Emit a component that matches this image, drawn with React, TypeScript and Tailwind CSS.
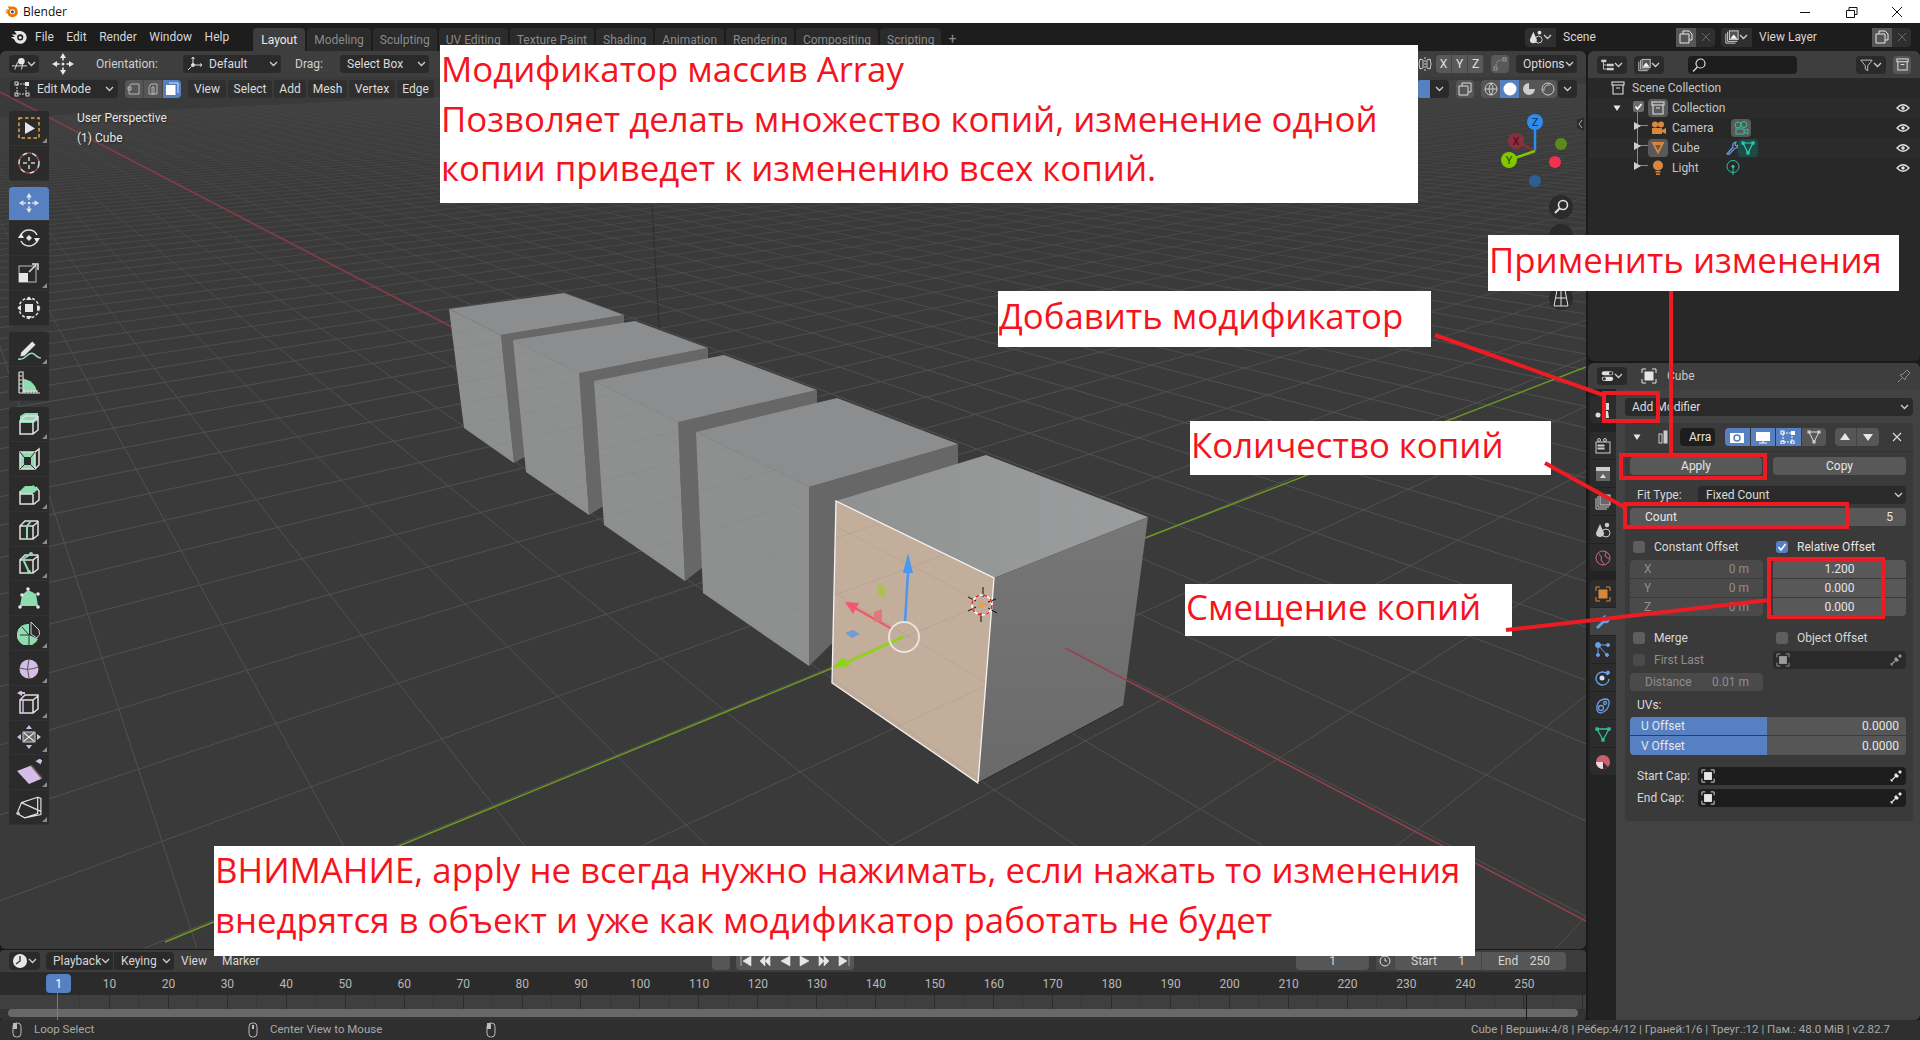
import type { ReactNode } from "react";

const UI = "font-['Roboto',sans-serif]";

const Ic = ({ s = 16, children, v = 24 }: { s?: number; v?: number; children: ReactNode }) => (
  <svg width={s} height={s} viewBox={`0 0 ${v} ${v}`} fill="none" stroke="#e0e0e0" strokeWidth="1.5" className="shrink-0">
    {children}
  </svg>
);

const G = "#8fdcb0";
const P = "#d6bde8";

const Box = () => (
  <path d="M3 9 L16 9 L21 5 L21 18 L16 22 L3 22 Z M16 9 L16 22 M3 9 L8 4 L21 4" />
);

const Chevron = ({ c = "#cfcfcf" }: { c?: string }) => (
  <svg width="9" height="6" viewBox="0 0 9 6" fill="none" stroke={c} strokeWidth="1.3" className="shrink-0">
    <path d="M1 1 L4.5 4.5 L8 1" />
  </svg>
);

const MoveIcon = ({ s = 22 }: { s?: number }) => (
  <Ic s={s}>
    <g fill="#e6e6e6" stroke="none">
      <path d="M12 1 L15 6 L9 6 Z M12 23 L15 18 L9 18 Z M1 12 L6 9 L6 15 Z M23 12 L18 9 L18 15 Z" />
      <circle cx="12" cy="12" r="1.5" />
      <rect x="11.2" y="6" width="1.6" height="2.5" />
      <rect x="11.2" y="15.5" width="1.6" height="2.5" />
      <rect x="6" y="11.2" width="2.5" height="1.6" />
      <rect x="15.5" y="11.2" width="2.5" height="1.6" />
    </g>
  </Ic>
);

const CubeSel = ({ c = "#e6e6e6", s = 16 }: { c?: string; s?: number }) => (
  <svg width={s} height={s} viewBox="0 0 16 16" className="shrink-0" fill="none" stroke={c} strokeWidth="1">
    <path d="M1 5 V1 H5 M11 1 H15 V5 M15 11 V15 H11 M5 15 H1 V11" />
    <rect x="3.5" y="3.5" width="9" height="9" fill={c} stroke="none" />
  </svg>
);

const Eye = () => (
  <svg width="14" height="10" viewBox="0 0 14 10" fill="none" stroke="#e4e4e4" strokeWidth="1.3" className="shrink-0">
    <path d="M1 5 Q7 -1.5 13 5 Q7 11.5 1 5 Z" />
    <circle cx="7" cy="5" r="1.8" fill="#e4e4e4" stroke="none" />
  </svg>
);

const Dropper = ({ c = "#e8e8e8" }: { c?: string }) => (
  <svg width="14" height="14" viewBox="0 0 14 14" className="shrink-0" fill="none" stroke={c} strokeWidth="1.2">
    <path d="M2 12 L8 6 M3.5 12.5 L1.5 10.5" />
    <path d="M7 4 L10 7 L8 9 L5 6 Z M9 3 L11 1 L13 3 L11 5" fill={c} stroke="none" />
  </svg>
);

const Mouse = ({ dot }: { dot?: boolean }) => (
  <svg width="10" height="16" viewBox="0 0 10 16" fill="none" stroke="#bdbdbd" strokeWidth="1" className="shrink-0">
    <rect x="1" y="1" width="8" height="14" rx="3.5" />
    {dot ? <rect x="4" y="3" width="2" height="4" fill="#bdbdbd" stroke="none" /> : <rect x="1" y="1" width="4" height="6" fill="#bdbdbd" stroke="none" />}
  </svg>
);

const Tri = ({ s = 8, c = "#e6e6e6" }: { s?: number; c?: string }) => (
  <svg width={s} height={s} viewBox="0 0 8 8" className="shrink-0">
    <path d="M0.5 1.5 H7.5 L4 7 Z" fill={c} />
  </svg>
);

const ArchiveIcon = ({ s = 14, c = "#dcdcdc" }: { s?: number; c?: string }) => (
  <svg width={s} height={s} viewBox="0 0 14 14" fill="none" stroke={c} strokeWidth="1.1" className="shrink-0">
    <rect x="1" y="1" width="12" height="3" />
    <path d="M2 4 V13 H12 V4 M5 7 H9" />
  </svg>
);

const ToolIcons: Record<string, ReactNode> = {
  select: (
    <Ic s={24}>
      <rect x="2" y="2" width="20" height="20" stroke="#e3a93c" strokeDasharray="3.5 2.5" />
      <path d="M8 6 L18 12.5 L8 18 Z" fill="#e6e6e6" stroke="none" />
    </Ic>
  ),
  cursor: (
    <Ic s={24}>
      <circle cx="12" cy="12" r="10" stroke="#dcdcdc" strokeDasharray="5 5" />
      <circle cx="12" cy="12" r="10" stroke="#a84444" strokeDasharray="5 5" strokeDashoffset="5" />
      <path d="M12 6 V10 M12 14 V18 M6 12 H10 M14 12 H18" stroke="#cfcfcf" />
    </Ic>
  ),
  move: <MoveIcon />,
  rotate: (
    <Ic s={24}>
      <path d="M4 9 A9 9 0 0 1 20 9 M20 15 A9 9 0 0 1 4 15" />
      <path d="M12 9 L15 12 L12 15 L9 12 Z" fill="#e6e6e6" stroke="none" />
      <path d="M1 12 L4 7 L7 12 Z M17 12 L20 17 L23 12 Z" fill="#e6e6e6" stroke="none" />
    </Ic>
  ),
  scale: (
    <Ic s={24}>
      <rect x="2" y="5" width="17" height="16" stroke="#bdbdbd" strokeWidth="1" />
      <rect x="2" y="12" width="9" height="9" fill="#e6e6e6" stroke="none" />
      <path d="M12 11 L19 4 M15 3 H21 V9" />
    </Ic>
  ),
  transform: (
    <Ic s={24}>
      <circle cx="12" cy="12" r="10" strokeDasharray="3 2" />
      <rect x="8" y="8" width="8" height="8" fill="#e6e6e6" stroke="none" />
      <path d="M12 0.5 L15 4 H9 Z M12 23.5 L15 20 H9 Z M0.5 12 L4 9 V15 Z M23.5 12 L20 9 V15 Z" fill="#e6e6e6" stroke="none" />
    </Ic>
  ),
  annotate: (
    <Ic s={26}>
      <path d="M5 15 L15 5 L18 8 L8 18 L4 19 Z" fill="#e6e6e6" stroke="none" />
      <path d="M2 21 C8 24 10 15 15 16 C19 17 19 21 23 20" stroke={G} />
    </Ic>
  ),
  measure: (
    <Ic s={24}>
      <path d="M6 21 V8 A15 15 0 0 1 20 21 Z" fill={G} stroke="none" />
      <path d="M2 1 H6 V22 H23 M2 22 V1 M2 22 H6 M8 19 V22 M11 19 V22 M14 19 V22 M17 19 V22 M20 19 V22 M2 5 H5 M2 9 H5 M2 13 H5 M2 17 H5" strokeWidth="1.2" />
    </Ic>
  ),
  extrude: (
    <Ic s={24}>
      <path d="M3 4 L8 1 H21 V8 L16 11 H3 Z" fill={G} stroke="none" />
      <Box />
    </Ic>
  ),
  inset: (
    <Ic s={24}>
      <path d="M3 5 H18 V22 H3 Z M7 10 V18 H14 V10 Z" fill={G} fillRule="evenodd" stroke="none" />
      <path d="M3 5 L18 5 L22 2 V18 L18 22 H3 Z M18 5 V22" />
      <path d="M3 5 L7 10 M18 5 L14 10 M3 22 L7 18 M18 22 L14 18" stroke="#333" strokeWidth="1" />
    </Ic>
  ),
  bevel: (
    <Ic s={24}>
      <path d="M3 9 L8 4 H15 L19 8 L15 12 H3 Z" fill={G} stroke="none" />
      <path d="M3 9 V22 H17 L22 18 V9 L19 5 M3 12 H16 M16 12 V22" />
      <path d="M16 3 L21 7 L17 11 L13 7 Z" fill={G} stroke="none" />
    </Ic>
  ),
  loop: (
    <Ic s={24}>
      <Box />
      <path d="M10 22 V9 L14 4" stroke={G} strokeWidth="2" />
    </Ic>
  ),
  knife: (
    <Ic s={24}>
      <Box />
      <path d="M6 8 L14 3 M6 8 L12 21" stroke={G} strokeWidth="2" />
      <circle cx="14" cy="3" r="2" fill={G} stroke="none" />
      <circle cx="12" cy="21" r="2" fill={G} stroke="none" />
    </Ic>
  ),
  poly: (
    <Ic s={24}>
      <path d="M3 20 L5 9 L11 4 L19 8 L21 20 Z" fill={G} stroke="none" />
      <g fill="#e6e6e6" stroke="none">
        <circle cx="3" cy="21" r="1.8" /><circle cx="21" cy="21" r="1.8" /><circle cx="11" cy="3" r="1.8" /><circle cx="21" cy="8" r="1.8" /><circle cx="5" cy="9" r="1.8" />
      </g>
    </Ic>
  ),
  spin: (
    <Ic s={24}>
      <path d="M12 3 V14 L21 18 A11 11 0 1 1 12 3 Z" fill={G} stroke="none" />
      <path d="M3 14 H12 L12 24 M12 14 L5 6" stroke="#333" strokeWidth="1" />
      <path d="M14 1 L22 9 Q24 14 20 17 L14 13 Z" stroke="#d0d0d0" strokeWidth="1" />
    </Ic>
  ),
  smooth: (
    <Ic s={24}>
      <circle cx="12" cy="13" r="9.5" fill={P} stroke="none" />
      <path d="M3 12 Q12 15 21 11 M12 3 Q9 13 12 22" stroke="#555" strokeWidth="1" />
    </Ic>
  ),
  edge: (
    <Ic s={24}>
      <path d="M3 9 L8 4 H21 V18 L16 22 H3 Z M16 9 V22 M3 9 H16 M16 9 L21 5" />
      <path d="M6 9 V22" stroke={P} />
      <path d="M0 2 L5 -1 V1 H8 V3 H5 V5 Z" fill={P} stroke="none" />
    </Ic>
  ),
  shrink: (
    <Ic s={24}>
      <rect x="6" y="7" width="12" height="10" fill="#666" stroke="#ccc" strokeWidth="1" />
      <path d="M7 8 L17 16 M17 8 L7 16" stroke="#e6e6e6" strokeWidth="1.2" />
      <path d="M12 0 L15 4 H9 Z M12 24 L15 20 H9 Z M0 12 L4 9 V15 Z M24 12 L20 9 V15 Z" fill={P} stroke="none" />
    </Ic>
  ),
  shear: (
    <Ic s={26}>
      <path d="M1 11 L14 6 L24 18 L12 23 Z" fill={P} stroke="none" />
      <path d="M14 6 L24 18" stroke="#666" />
      <path d="M18 2 L23 -1 V1 H26 V3 H23 V5 Z" fill={P} stroke="none" />
    </Ic>
  ),
  rip: (
    <Ic s={26}>
      <path d="M5 8 L20 3 V18 L8 22 L1 18 Z M20 3 L23 4 V19 L8 22 M5 8 L23 16" strokeWidth="1.1" />
      <circle cx="2" cy="18" r="1.6" fill={P} stroke="none" />
    </Ic>
  ),
};

const toolGroups: [string, boolean][][] = [
  [["select", true], ["cursor", false]],
  [["move", false], ["rotate", false], ["scale", true], ["transform", false]],
  [["annotate", true], ["measure", false]],
  [["extrude", true], ["inset", false], ["bevel", true], ["loop", true], ["knife", true], ["poly", false], ["spin", true], ["smooth", true], ["edge", true], ["shrink", true], ["shear", true], ["rip", true]],
];

function Toolbar() {
  return (
    <div className="flex flex-col gap-[6px] w-[40px] shrink-0">
      {toolGroups.map((g, i) => (
        <div key={i} className="flex flex-col rounded-[3px] bg-[#2b2b2b] overflow-hidden">
          {g.map(([name, corner]) => (
            <div
              key={name}
              className={`h-[34.8px] relative flex items-center justify-center border-b border-[#323232] ${name === "move" ? "bg-[#5680c2] rounded-t-[3px]" : ""}`}
            >
              {ToolIcons[name]}
              {corner && <span className="absolute right-[2px] bottom-[2px] w-0 h-0 border-l-[5px] border-l-transparent border-b-[5px] border-b-[#8a8a8a]" />}
            </div>
          ))}
        </div>
      ))}
    </div>
  );
}

// floor grid, projected from the two vanishing points read off the cubes
const project = (u: number, v: number): [number, number] | null => {
  const a = 0.0713 * u;
  const b = 0.05 * v;
  const w = 1 + a + b;
  if (w < 0.03) return null;
  return [(985 - 100 * a + 2460 * b) / w, (604 + 40 * a) / w];
};

function gridPath() {
  let d = "";
  const line = (pts: (number[] | null)[]) => {
    let first = true;
    pts.forEach((p) => {
      if (!p) {
        first = true;
        return;
      }
      d += `${first ? "M" : "L"}${p[0].toFixed(1)} ${p[1].toFixed(1)} `;
      first = false;
    });
  };
  for (let u = -40; u <= 90; u++) {
    const pts = [];
    for (let v = -80; v <= 100; v += 2) pts.push(project(u, v));
    line(pts);
  }
  for (let v = -80; v <= 100; v++) {
    const pts = [];
    for (let u = -40; u <= 90; u += 2) pts.push(project(u, v));
    line(pts);
  }
  return d;
}

const CubeBack = ({ top, left, right }: { top: string; left: string; right: string }) => (
  <g>
    <polygon points={right} fill="#676767" />
    <polygon points={top} fill="#8b8d8e" />
    <polygon points={left} fill="#8e9090" />
  </g>
);

function Scene() {
  const grid = gridPath();
  return (
    <svg className="absolute inset-0" width="1586" height="897" viewBox="0 51 1586 897">
      <defs>
        <linearGradient id="rf" x1="0" y1="0" x2="0" y2="1">
          <stop offset="0" stopColor="#777" />
          <stop offset="1" stopColor="#6a6a6a" />
        </linearGradient>
        <linearGradient id="tf" x1="0" y1="0" x2="1" y2="0">
          <stop offset="0" stopColor="#909292" />
          <stop offset="1" stopColor="#9b9d9e" />
        </linearGradient>
        <linearGradient id="fade" gradientUnits="userSpaceOnUse" x1="0" y1="70" x2="0" y2="400">
          <stop offset="0" stopColor="#505050" stopOpacity="0.15" />
          <stop offset="1" stopColor="#505050" stopOpacity="1" />
        </linearGradient>
        <clipPath id="faces">
          <polygon points="449,309 501,335 514,463 464,428" />
          <polygon points="513,340 579,373 589,515 526,472" />
          <polygon points="594,381 678,422 685,581 604,525" />
          <polygon points="696,432 809,487 809,666 703,593" />
          <polygon points="836,501 994,578 978,783 832,683" />
          <polygon points="994,578 1148,517 1123,706 978,783" />
        </clipPath>
      </defs>
      <path d={grid} stroke="url(#fade)" strokeWidth="1" fill="none" />
      <line x1="0" y1="92" x2="452" y2="327" stroke="#8a3b47" strokeWidth="1.5" />
      <line x1="165" y1="942" x2="835" y2="667" stroke="#6f9a1f" strokeWidth="1.5" />
      <line x1="1145" y1="538" x2="1586" y2="367" stroke="#6f9a1f" strokeWidth="1.5" />
      <line x1="652" y1="205" x2="669" y2="497" stroke="#222" strokeWidth="1" strokeOpacity="0.55" />

      <CubeBack top="449,309 564,293 624,315 501,335" left="449,309 501,335 514,463 464,428" right="501,335 624,315 624,400 514,463" />
      <CubeBack top="513,340 635,321 708,348 579,373" left="513,340 579,373 589,515 526,472" right="579,373 708,348 708,440 589,515" />
      <CubeBack top="594,381 724,355 817,390 678,422" left="594,381 678,422 685,581 604,525" right="678,422 817,390 817,480 685,581" />
      <CubeBack top="696,432 837,398 958,444 809,487" left="696,432 809,487 809,666 703,593" right="809,487 958,444 958,520 809,666" />

      <polygon points="836,501 986,455 1148,517 994,578" fill="url(#tf)" />
      <polygon points="994,578 1148,517 1123,706 978,783" fill="url(#rf)" />
      <polygon points="836,501 994,578 978,783 832,683" fill="#c2ae9b" />
      <path d={grid} stroke="#777" strokeWidth="1" fill="none" strokeOpacity="0.14" clipPath="url(#faces)" />
      <path d="M836 501 L994 578 L978 783 L832 683 Z" stroke="#f4f4f4" strokeWidth="1.3" fill="none" />
      <path d="M978 783 L1123 706" stroke="#2c2c2c" strokeWidth="1" fill="none" />
      <line x1="1065" y1="648" x2="1586" y2="921" stroke="#9a3f4c" strokeWidth="1.5" />

      {/* gizmo */}
      <line x1="905" y1="622" x2="908" y2="573" stroke="#4b96f0" strokeWidth="2.5" />
      <polygon points="908,553 903,573 913,573" fill="#4b96f0" />
      <line x1="892" y1="629" x2="855" y2="608" stroke="#f4566e" strokeWidth="2.5" />
      <polygon points="845,602 859,603 853,614" fill="#f4566e" />
      <line x1="903" y1="637" x2="848" y2="662" stroke="#8fd414" strokeWidth="2.5" />
      <polygon points="832,668 843,657 850,666" fill="#8fd414" />
      <polygon points="878,584 885,587 885,598 878,594" fill="#a9c24f" />
      <polygon points="874,612 882,609 882,621 874,622" fill="#dc7a7c" />
      <polygon points="845,633 853,630 860,634 852,638" fill="#6f9bd6" />
      <circle cx="904" cy="637" r="15" stroke="#e9e4dd" strokeWidth="2" fill="none" />
      <g stroke="#111" strokeWidth="1">
        <path d="M983 587 V597 M981 613 V622 M968 597 L976 601 M988 608 L997 613 M968 611 L976 607 M988 602 L996 599" />
      </g>
      <circle cx="982" cy="605" r="10" stroke="#fff" strokeWidth="1.5" fill="none" />
      <circle cx="982" cy="605" r="10" stroke="#e21e1e" strokeWidth="1.5" strokeDasharray="4 4" fill="none" />
      <circle cx="982" cy="605" r="2.5" fill="#f0a040" />

      {/* navigation gizmo */}
      <line x1="1535" y1="151" x2="1535" y2="122" stroke="#2e8cf0" strokeWidth="2.5" />
      <line x1="1535" y1="151" x2="1516" y2="141" stroke="#8b2f3f" strokeWidth="2.5" />
      <line x1="1535" y1="151" x2="1509" y2="160" stroke="#7fc800" strokeWidth="2.5" />
      <circle cx="1535" cy="181" r="6" fill="#2c5f96" />
      <circle cx="1561" cy="144" r="6" fill="#5c8a1c" />
      <circle cx="1555" cy="162" r="6" fill="#f2304f" />
      <circle cx="1516" cy="141" r="8" fill="#8b2f3f" />
      <circle cx="1509" cy="160" r="8" fill="#7fc800" />
      <circle cx="1535" cy="122" r="8" fill="#2e8cf0" />
      <text x="1516" y="145" textAnchor="middle" fontSize="11" fontFamily="Roboto" fill="#401017">X</text>
      <text x="1509" y="164" textAnchor="middle" fontSize="11" fontFamily="Roboto" fill="#2c4400">Y</text>
      <text x="1535" y="126" textAnchor="middle" fontSize="11" fontFamily="Roboto" fill="#0c2a4c">Z</text>
      <circle cx="1561" cy="207" r="12" fill="#2b2b2b" />
      <circle cx="1563" cy="205" r="4.5" stroke="#e0e0e0" strokeWidth="1.6" fill="none" />
      <line x1="1560" y1="208" x2="1555" y2="213" stroke="#e0e0e0" strokeWidth="2" />
      <circle cx="1561" cy="236" r="12" fill="#2b2b2b" />
      <circle cx="1561" cy="298" r="12" fill="#2b2b2b" />
      <path d="M1554 306 L1557 290 H1565 L1568 306 Z M1556 298 H1566 M1561 290 V306" stroke="#e0e0e0" strokeWidth="1" fill="none" />
      <path d="M1584 117 L1577 120 V128 L1584 131 Z" fill="#2b2b2b" />
      <path d="M1582 120 L1579 124 L1582 128" stroke="#aaa" fill="none" />
    </svg>
  );
}

const menus = [
  { t: "View", w: "w-[38px]" },
  { t: "Select", w: "w-[44px]" },
  { t: "Add", w: "w-[32px]" },
  { t: "Mesh", w: "w-[39px]" },
  { t: "Vertex", w: "w-[46px]" },
  { t: "Edge", w: "w-[37px]" },
];

const Dd = ({ w, children, className = "" }: { w: string; children: ReactNode; className?: string }) => (
  <div className={`${w} h-[18px] rounded-[4px] bg-[#2a2a2a] flex items-center justify-between text-[#dcdcdc] shrink-0 ${className}`}>
    {children}
  </div>
);

function Viewport() {
  return (
    <div className="relative flex-1 min-h-0 rounded-[6px] overflow-hidden bg-[#3a3a3a]">
      <Scene />
      <div className="relative flex flex-col h-full">
        <div className="h-[26px] bg-[#3e3e3e] flex items-center pl-[9px]">
          <Dd w="w-[30px]" className="px-[3px]">
            <svg width="16" height="14" viewBox="0 0 16 14" fill="none" stroke="#dcdcdc" strokeWidth="1">
              <path d="M0 9 H16 M3 13 L6 5 M10 13 L12 5" />
              <circle cx="10" cy="4" r="3.5" fill="#e6e6e6" stroke="none" />
            </svg>
            <Chevron />
          </Dd>
          <div className="ml-[12px] w-[24px]"><MoveIcon s={24} /></div>
          <span className="ml-[21px] w-[87px] text-[#d0d0d0]">Orientation:</span>
          <Dd w="w-[98px]" className="pl-[4px] pr-[3px]">
            <svg width="16" height="16" viewBox="0 0 16 16" fill="none" stroke="#dcdcdc" strokeWidth="1">
              <circle cx="6" cy="9" r="1.5" fill="#dcdcdc" />
              <path d="M6 7 V1 M4.5 3 L6 1 L7.5 3 M8 9 H15 M13 7.5 L15 9 L13 10.5 M4.5 10.5 L1 14" />
            </svg>
            <span className="mr-auto ml-[6px]">Default</span>
            <Chevron />
          </Dd>
          <span className="ml-[14px] w-[45px] text-[#d0d0d0]">Drag:</span>
          <Dd w="w-[89px]" className="pl-[7px] pr-[3px]">
            <span>Select Box</span>
            <Chevron />
          </Dd>
          <div className="ml-auto flex items-center pr-[9px]">
            <svg width="14" height="16" viewBox="0 0 14 16" fill="none" stroke="#cfcfcf" className="mr-[4px]"><path d="M7 1 V15" strokeDasharray="2 1" /><path d="M5 4 L2 3 L1 8 L2 13 L5 12 Z M9 4 L12 3 L13 8 L12 13 L9 12 Z" /></svg>
            <div className="flex rounded-[4px] bg-[#595959] text-[#e0e0e0] h-[18px]">
              {["X", "Y", "Z"].map((a) => (
                <span key={a} className="w-[16px] flex items-center justify-center border-r border-[#444]">{a}</span>
              ))}
            </div>
            <div className="ml-[7px] w-[18px] h-[18px] rounded-[4px] bg-[#595959] flex items-center justify-center">
              <svg width="14" height="14" viewBox="0 0 14 14" fill="none" stroke="#999" strokeWidth="1">
                <rect x="1" y="10" width="3" height="3" /><rect x="10" y="1" width="3" height="3" /><path d="M3 9 Q3 3 9 3" strokeDasharray="2 1" />
              </svg>
            </div>
            <Dd w="w-[61px]" className="ml-[7px] pl-[7px] pr-[3px]">
              <span>Options</span>
              <Chevron />
            </Dd>
          </div>
        </div>
        <div className="h-[24px] flex items-center pl-[10px]">
          <Dd w="w-[108px]" className="pl-[4px] pr-[4px]">
            <svg width="16" height="16" viewBox="0 0 16 16" fill="none" stroke="#cfcfcf" strokeWidth="1" className="shrink-0">
              <path d="M3 3 H12 V13 H3 Z" strokeDasharray="2 1" />
              <rect x="1" y="1" width="3" height="3" /><rect x="1" y="12" width="3" height="3" /><rect x="12" y="12" width="3" height="3" />
              <rect x="11" y="1" width="4" height="4" fill="#e6e6e6" stroke="none" />
            </svg>
            <span className="mr-auto ml-[7px]">Edit Mode</span>
            <Chevron />
          </Dd>
          <div className="ml-[7px] flex h-[18px] rounded-[4px] overflow-hidden">
            {[0, 1].map((i) => (
              <div key={i} className="w-[19px] bg-[#565656] border-r border-[#444] flex items-center justify-center">
                <svg width="14" height="14" viewBox="0 0 14 14" fill="none" stroke="#b5b5b5" strokeWidth="1">
                  {i === 0 ? <path d="M2 5 V12 H12 V2 H4 Z M1 5 H4 V8 H1 Z" /> : <path d="M3 5 V12 H11 V2 H5 Z M6 5 H8 V12 H6 Z" />}
                </svg>
              </div>
            ))}
            <div className="w-[18px] bg-[#5680c2] flex items-center justify-center">
              <svg width="14" height="14" viewBox="0 0 14 14" fill="none" stroke="#dce6f4" strokeWidth="1">
                <rect x="1" y="3" width="9.5" height="10" fill="#fff" stroke="none" />
                <path d="M4 1 H13 V11" />
              </svg>
            </div>
          </div>
          <div className="ml-[7px] flex gap-[2px]">
            {menus.map((m) => (
              <div key={m.t} className={`${m.w} h-[18px] flex items-center justify-center rounded-[3px] bg-[#2f2f2f] text-[#dcdcdc]`}>
                {m.t}
              </div>
            ))}
          </div>
          <div className="ml-auto flex items-center pr-[9px]">
            <div className="w-[32px] h-[18px] rounded-[4px] overflow-hidden flex">
              <div className="w-[13px] bg-[#5680c2]" />
              <div className="w-[19px] bg-[#2a2a2a] flex items-center justify-center"><Chevron /></div>
            </div>
            <div className="ml-[7px] w-[18px] h-[18px] rounded-[4px] bg-[#565656] flex items-center justify-center">
              <svg width="14" height="14" viewBox="0 0 14 14" fill="none" stroke="#ddd" strokeWidth="1">
                <path d="M4 4 V1 H13 V10 H10 M1 4 H10 V13 H1 Z" />
              </svg>
            </div>
            <div className="ml-[7px] flex h-[18px] rounded-[4px] overflow-hidden">
              {["wire", "solid", "look", "render"].map((m) => (
                <div key={m} className={`w-[19px] flex items-center justify-center ${m === "solid" ? "bg-[#5680c2]" : "bg-[#565656]"}`}>
                  <svg width="14" height="14" viewBox="0 0 14 14" fill="none" stroke="#ccc" strokeWidth="1">
                    {m === "wire" && <path d="M7 1 A6 6 0 1 0 7 13 A6 6 0 1 0 7 1 M1 7 H13 M7 1 Q3 7 7 13 M7 1 Q11 7 7 13" />}
                    {m === "solid" && <circle cx="7" cy="7" r="6.5" fill="#fff" stroke="none" />}
                    {m === "look" && <path d="M7 1 A6 6 0 1 0 13 7 H7 Z" fill="#ccc" stroke="none" />}
                    {m === "render" && <path d="M7 1 A6 6 0 1 0 7 13 A6 6 0 1 0 7 1 M3 9 A5 5 0 0 1 9 3" />}
                  </svg>
                </div>
              ))}
            </div>
            <div className="w-[19px] h-[18px] ml-[1px] rounded-[4px] bg-[#2a2a2a] flex items-center justify-center"><Chevron /></div>
          </div>
        </div>
        <div className="flex pl-[9px] pt-[10px]">
          <Toolbar />
          <div className="ml-[28px] -mt-[3px] text-[#e6e6e6] [text-shadow:1px_1px_2px_#0008] leading-[20px]">
            <div>User Perspective</div>
            <div>(1) Cube</div>
          </div>
        </div>
      </div>
    </div>
  );
}

const frames = Array.from({ length: 25 }, (_, i) => (i + 1) * 10);

function Timeline() {
  return (
    <div className="h-[70px] mt-[1px] rounded-[4px] overflow-hidden flex flex-col bg-[#3d3d3d] relative">
      <div className="h-[22px] flex items-center pl-[9px] pb-[1px] text-[#d6d6d6]">
        <Dd w="w-[31px]" className="px-[3px]">
          <svg width="16" height="16" viewBox="0 0 16 16"><circle cx="8" cy="8" r="7" fill="#e6e6e6" /><path d="M8 3 V8 L4 11" stroke="#333" strokeWidth="1.4" fill="none" /></svg>
          <Chevron />
        </Dd>
        <div className="ml-[6px] flex h-[18px] rounded-[4px] bg-[#2a2a2a] overflow-hidden">
          <div className="w-[68px] pl-[7px] pr-[3px] flex items-center justify-between border-r border-[#3d3d3d]">Playback <Chevron /></div>
          <div className="w-[60px] pl-[7px] pr-[3px] flex items-center justify-between">Keying <Chevron /></div>
        </div>
        <span className="w-[41px] ml-[7px]">View</span>
        <span className="w-[40px]">Marker</span>
        <div className="ml-[450px] w-[18px] h-[18px] rounded-[4px] bg-[#565656]" />
        <div className="ml-[6px] w-[118px] h-[18px] rounded-[4px] bg-[#565656] flex items-center justify-around">
          {["M2 2 V12 M12 2 L4 7 L12 12 Z", "M2 7 L7 2 V12 Z M7 7 L12 2 V12 Z", "M12 2 L3 7 L12 12 Z", "M2 2 L11 7 L2 12 Z", "M2 2 L7 7 L2 12 Z M7 2 L12 7 L7 12 Z", "M12 2 V12 M2 2 L10 7 L2 12 Z"].map((d) => (
            <svg key={d} width="14" height="14" viewBox="0 0 14 14"><path d={d} fill="#e6e6e6" stroke="#e6e6e6" strokeWidth="0.6" /></svg>
          ))}
        </div>
        <div className="ml-[442px] w-[73px] h-[18px] rounded-[4px] bg-[#565656] flex items-center justify-center">1</div>
        <div className="ml-[7px] w-[190px] h-[18px] rounded-[4px] bg-[#565656] flex items-center overflow-hidden">
          <div className="w-[19px] h-full flex items-center justify-center border-r border-[#444] bg-[#4a4a4a]">
            <svg width="12" height="12" viewBox="0 0 12 12" fill="none" stroke="#ddd"><circle cx="6" cy="6" r="5" /><path d="M6 3 V6 H8" /></svg>
          </div>
          <div className="w-[87px] h-full flex items-center justify-between px-[16px] border-r border-[#444]"><span>Start</span><span>1</span></div>
          <div className="w-[84px] h-full flex items-center justify-between px-[16px]"><span>End</span><span>250</span></div>
        </div>
      </div>
      <div className="h-[23px] bg-[#2b2b2b] flex items-center relative pl-[80px] text-[#b8b8b8]">
        {frames.map((f) => (
          <span key={f} className="w-[58.96px] shrink-0 text-center">{f}</span>
        ))}
        <span className="absolute left-[46px] top-[2px] w-[25px] h-[19px] rounded-[4px] bg-[#5680c2] text-white flex items-center justify-center">1</span>
      </div>
      <div className="h-[14px] bg-[#3f3f3f] flex pl-[51px] overflow-hidden">
        {Array.from({ length: 52 }, (_, i) => (
          <div key={i} className={`w-[29.48px] shrink-0 border-r ${i % 2 ? "border-[#2c2c2c]" : "border-[#383838]"}`} />
        ))}
      </div>
      <div className="h-[11px] bg-[#333] flex items-start px-[8px]">
        <div className="w-full h-[8px] rounded-full bg-[#686868]" />
      </div>
      <span className="absolute left-[57px] top-[43px] w-[1px] h-[27px] bg-[#5680c2]" />
      <span className="absolute left-[1526px] top-[45px] w-[1px] h-[25px] bg-[#1a1a1a]" />
    </div>
  );
}

const TreeRow = ({ name, bg, icon, chip, extra }: { name: string; bg: string; icon: ReactNode; chip?: boolean; extra?: ReactNode }) => (
  <div className={`h-[20px] ${bg} relative flex items-center pl-[60px] text-[#c6c6c6]`}>
    <span className={`w-[20px] h-[18px] flex items-center justify-center rounded-[4px] ${chip ? "bg-[#5a5a5a]" : ""}`}>{icon}</span>
    <span className="ml-[4px] w-[50px]">{name}</span>
    {extra}
    <span className="absolute right-[10px] top-[5px]"><Eye /></span>
  </div>
);

const OB = "#d9863f";

function Outliner() {
  return (
    <div className="h-[310px] rounded-[6px] overflow-hidden bg-[#282828] flex flex-col">
      <div className="h-[27px] bg-[#3e3e3e] flex items-center pl-[9px] shrink-0">
        <Dd w="w-[30px]" className="px-[4px]">
          <svg width="16" height="14" viewBox="0 0 16 14" fill="none" stroke="#dcdcdc"><rect x="1" y="1" width="5" height="2" fill="#ddd" /><path d="M3 3 V12 H8 M3 7 H8" /><rect x="8" y="6" width="7" height="2" fill="#ddd" /><rect x="8" y="11" width="7" height="2" fill="#ddd" /></svg>
          <Chevron />
        </Dd>
        <Dd w="w-[30px]" className="ml-[7px] px-[4px]">
          <svg width="16" height="16" viewBox="0 0 16 16" fill="none" stroke="#dcdcdc"><path d="M1 4 V15 H12 M3 2 V13 H14" /><rect x="5" y="1" width="10" height="10" fill="#555" /><path d="M6 10 L10 5 L14 10 Z" fill="#fff" stroke="none" /></svg>
          <Chevron />
        </Dd>
        <div className="ml-[24px] w-[109px] h-[18px] rounded-[4px] bg-[#1d1d1d] flex items-center pl-[4px]">
          <svg width="14" height="14" viewBox="0 0 14 14" fill="none" stroke="#ddd" strokeWidth="1.2"><circle cx="8.5" cy="5.5" r="4.5" /><path d="M5.5 9 L1 13.5" /></svg>
        </div>
        <Dd w="w-[30px]" className="ml-[59px] px-[4px]">
          <svg width="16" height="16" viewBox="0 0 16 16" fill="none" stroke="#ddd"><path d="M1 2 H15 L9.5 9 V15 L6.5 13 V9 Z" /></svg>
          <Chevron />
        </Dd>
        <div className="ml-[7px] w-[18px] h-[18px] rounded-[4px] bg-[#565656] flex items-center justify-center relative">
          <ArchiveIcon s={13} />
        </div>
      </div>
      <div className="h-[20px] bg-[#282828] flex items-center pl-[23px] text-[#c6c6c6]">
        <ArchiveIcon />
        <span className="ml-[7px]">Scene Collection</span>
      </div>
      <div className="relative flex flex-col">
        <TreeRow name="Collection" bg="bg-[#2b2b2b]" chip icon={<ArchiveIcon />} />
        <TreeRow
          name="Camera"
          bg="bg-[#282828]"
          icon={<svg width="16" height="14" viewBox="0 0 16 14"><circle cx="5" cy="3.5" r="3" fill={OB} /><circle cx="11" cy="3.5" r="3" fill={OB} /><rect x="2" y="7" width="10" height="6" fill={OB} /><path d="M12 9 L16 7 V13 L12 11 Z" fill={OB} /></svg>}
          extra={
            <span className="ml-[9px] w-[20px] h-[18px] rounded-[4px] bg-[#5a5a5a] flex items-center justify-center">
              <svg width="16" height="14" viewBox="0 0 16 14" fill="none" stroke="#2fc2a0"><circle cx="5" cy="4" r="3" /><circle cx="11" cy="3.5" r="3" /><rect x="3" y="8" width="8" height="5" /><path d="M11 10 L15 8 V13 L11 11" /></svg>
            </span>
          }
        />
        <TreeRow
          name="Cube"
          bg="bg-[#2b2b2b]"
          chip
          icon={<svg width="14" height="14" viewBox="0 0 14 14"><path d="M0.5 1 H13.5 L7 13.5 Z M4 4 L7 9.5 L10 4 Z" fill={OB} fillRule="evenodd" /></svg>}
          extra={
            <>
              <svg width="14" height="14" viewBox="0 0 14 14" fill="none" stroke="#6e9bdc" strokeWidth="1.2" className="shrink-0 ml-[4px]"><path d="M1 13 L7 6 Q6 2 10 1 L9 4 L11 5 L13 3 Q13 7 8.5 7.5 L3 13.5 Z" /></svg>
              <span className="w-[20px] h-[18px] ml-[-2px] rounded-[4px] bg-[#1d4a44] flex items-center justify-center">
                <svg width="14" height="14" viewBox="0 0 14 14" fill="none" stroke="#2fd0aa" strokeWidth="1.2"><path d="M2 2 H12 L7 12 Z" /><rect x="1" y="1" width="2" height="2" /><rect x="11" y="1" width="2" height="2" /><rect x="6" y="11" width="2" height="2" /></svg>
              </span>
            </>
          }
        />
        <TreeRow
          name="Light"
          bg="bg-[#282828]"
          icon={<svg width="14" height="16" viewBox="0 0 14 16"><circle cx="7" cy="5.5" r="5" fill={OB} /><rect x="4.5" y="11" width="5" height="1.5" fill={OB} /><rect x="5" y="13.5" width="4" height="1.5" fill={OB} /></svg>}
          extra={
            <svg width="14" height="16" viewBox="0 0 14 16" fill="none" stroke="#2fc2a0" className="shrink-0 ml-[4px]"><circle cx="7" cy="6.5" r="6" /><circle cx="7" cy="6.5" r="1.2" fill="#2fc2a0" /><path d="M7 8 V15" /></svg>
          }
        />
        <div className="absolute left-[49px] top-[6px] w-[1px] h-[62px] bg-[#8a8a8a]" />
        <span className="absolute left-[25px] top-[6px]"><Tri /></span>
        <span className="absolute left-[45px] top-[3px] w-[11px] h-[11px] rounded-[2px] bg-[#6b6b6b] flex items-center justify-center">
          <svg width="9" height="9" viewBox="0 0 9 9" fill="none" stroke="#fff" strokeWidth="1.6"><path d="M1.5 4.5 L3.5 7 L7.5 2" /></svg>
        </span>
        {[28, 48, 68].map((t) => (
          <div key={t} className="absolute left-[49px] w-[11px] h-[1px] bg-[#8a8a8a]" style={{ top: t - 1 }} />
        ))}
        {[24, 44, 64].map((t) => (
          <span key={t} className="absolute left-[46px]" style={{ top: t }}>
            <svg width="7" height="8" viewBox="0 0 7 8"><path d="M0 0 L7 4 L0 8 Z" fill="#cfcfcf" /></svg>
          </span>
        ))}
      </div>
    </div>
  );
}

const tabs: string[][] = [["tool"], ["render", "output", "layer", "scene", "world"], ["object", "mod", "part", "phys", "cons", "data", "mat"]];

const TabIcon = ({ n }: { n: string }) => {
  const blue = "#6a9fe8";
  if (n === "tool") return <svg width="16" height="16" viewBox="0 0 16 16"><circle cx="3" cy="13" r="2.5" fill="#ddd" /><path d="M10 1 V8 H14 V1 Z M8 16 H14 L13 9 H9 Z" fill="#ddd" /></svg>;
  if (n === "render") return <svg width="16" height="16" viewBox="0 0 16 16" fill="none" stroke="#ccc"><rect x="1" y="4" width="14" height="11" /><circle cx="4" cy="2" r="1.5" /><circle cx="10" cy="2" r="1.5" /><rect x="3" y="7" width="6" height="1" fill="#ccc" /><rect x="3" y="10" width="6" height="1" fill="#ccc" /></svg>;
  if (n === "output") return <svg width="16" height="16" viewBox="0 0 16 16"><rect x="1" y="1" width="14" height="4" fill="#ccc" /><path d="M1 5 H15 V15 H1 Z" fill="#ccc" fillOpacity="0.35" /><path d="M5 12 L8 8 L11 12 Z" fill="#ddd" /></svg>;
  if (n === "layer") return <svg width="16" height="16" viewBox="0 0 16 16" fill="none" stroke="#ccc"><path d="M1 4 V15 H12 M3 2 V13 H14" /><rect x="5" y="1" width="10" height="10" fill="#666" /></svg>;
  if (n === "scene") return <svg width="16" height="16" viewBox="0 0 16 16"><path d="M5 2 L9 11 A4 4 0 0 1 1 11 Z" fill="#ccc" /><circle cx="12" cy="3" r="2.2" fill="#ccc" /><circle cx="11" cy="11" r="4" fill="none" stroke="#ccc" /></svg>;
  if (n === "world") return <svg width="16" height="16" viewBox="0 0 16 16" fill="none" stroke="#d8697a"><circle cx="8" cy="8" r="7" /><path d="M4 4 Q8 7 6 10 L9 14 M11 2 L10 6 L14 9" /></svg>;
  if (n === "object") return <CubeSel c="#d9863f" />;
  if (n === "mod") return <svg width="16" height="16" viewBox="0 0 16 16"><path d="M1 13 L7 7 Q6 2 11 1 L9.5 4.5 L11.5 6.5 L15 5 Q14.5 10 9 9 L3 15 Z" fill={blue} /></svg>;
  if (n === "part") return <svg width="16" height="16" viewBox="0 0 16 16" fill="none" stroke={blue}><path d="M3 3 L13 3 M3 3 L3 13 M3 3 L12 13" /><circle cx="3" cy="3" r="2.5" fill={blue} /><circle cx="13" cy="3" r="1.5" fill={blue} /><circle cx="3" cy="13" r="1.5" fill={blue} /><circle cx="12" cy="13" r="1.5" fill={blue} /></svg>;
  if (n === "phys") return <svg width="16" height="16" viewBox="0 0 16 16" fill="none" stroke={blue}><path d="M13 5 A6.5 6.5 0 1 0 14 9" strokeWidth="1.4" /><circle cx="7" cy="8" r="2.5" fill="#cfe0f6" stroke="none" /><circle cx="13" cy="2.5" r="2" fill={blue} stroke="none" /></svg>;
  if (n === "cons") return <svg width="16" height="16" viewBox="0 0 16 16" fill="none" stroke={blue} strokeWidth="1.3"><path d="M2 8 Q3 2 10 1 Q15 1 14 6 Q13 13 6 15 Q1 15 2 8 Z" /><circle cx="6" cy="10" r="2.5" /><circle cx="10" cy="5" r="1.5" /></svg>;
  if (n === "data") return <svg width="16" height="16" viewBox="0 0 16 16" fill="none" stroke="#2fc2a0" strokeWidth="1.3"><path d="M2 3 H14 L8 14 Z" /><rect x="1" y="2" width="2" height="2" /><rect x="13" y="2" width="2" height="2" /><rect x="7" y="13" width="2" height="2" /></svg>;
  return <svg width="16" height="16" viewBox="0 0 16 16"><circle cx="8" cy="8" r="7" fill="#c8606e" /><path d="M1 8 H8 L8 15 A7 7 0 0 1 1 8 Z" fill="#f0d8dc" /><path d="M8 8 L13 13 A7 7 0 0 1 8 15 Z" fill="#333" /></svg>;
};

const Field = ({ label, value, dim, w = "w-[133px]" }: { label?: string; value?: string; dim?: boolean; w?: string }) => (
  <div className={`${w} h-[18px] flex items-center px-[14px] ${dim ? "bg-[#4a4a4a] text-[#8e8e8e]" : "bg-[#585858] text-[#e6e6e6] justify-center"}`}>
    {label && <span className="mr-auto">{label}</span>}
    <span>{value}</span>
  </div>
);

const Check = ({ on, dim }: { on?: boolean; dim?: boolean }) => (
  <span className={`w-[12px] h-[12px] rounded-[3px] flex items-center justify-center shrink-0 ${on ? "bg-[#5680c2]" : dim ? "bg-[#4a4a4a]" : "bg-[#5e5e5e]"}`}>
    {on && <svg width="10" height="10" viewBox="0 0 10 10" fill="none" stroke="#fff" strokeWidth="1.6"><path d="M1.5 5 L4 8 L8.5 2" /></svg>}
  </span>
);

const Slider = ({ label, value, top }: { label: string; value: string; top?: boolean }) => (
  <div className={`h-[19px] flex bg-[#565656] relative ${top ? "rounded-t-[4px] border-b border-[#3d3d3d]" : "rounded-b-[4px]"} overflow-hidden text-[#e6e6e6]`}>
    <div className="w-[137px] bg-[#5680c2] pl-[11px] flex items-center">{label}</div>
    <div className="flex-1 flex items-center justify-end pr-[7px]">{value}</div>
  </div>
);

function Properties() {
  return (
    <div className="flex-1 mt-[2px] rounded-[6px] overflow-hidden flex flex-col bg-[#424242]">
      <div className="h-[26px] bg-[#3e3e3e] flex items-center pl-[9px] shrink-0 text-[#c8c8c8]">
        <Dd w="w-[30px]" className="px-[4px]">
          <svg width="16" height="14" viewBox="0 0 16 14"><rect x="1" y="1" width="14" height="5" rx="2.5" fill="#e0e0e0" /><rect x="1" y="8" width="14" height="5" rx="2.5" fill="#e0e0e0" /><circle cx="12" cy="3.5" r="2" fill="#333" /><circle cx="4" cy="10.5" r="2" fill="#333" /></svg>
          <Chevron />
        </Dd>
        <span className="ml-[14px]"><CubeSel /></span>
        <span className="ml-[10px]">Cube</span>
        <svg width="14" height="14" viewBox="0 0 14 14" fill="none" stroke="#888" className="ml-auto mr-[9px]"><path d="M1 13 L5 9 M3 6 L8 11 L9 8 L13 4 L10 1 L6 5 Z" /></svg>
      </div>
      <div className="flex-1 flex min-h-0">
        <div className="w-[28px] shrink-0 bg-[#232323] flex flex-col pt-[7px] gap-[9px] pl-[2px]">
          {tabs.map((t, i) => (
            <div key={i} className="flex flex-col gap-[1px] rounded-l-[4px] overflow-hidden">
              {t.map((n) => (
                <div key={n} className={`h-[27px] flex items-center justify-center ${n === "mod" ? "bg-[#424242]" : "bg-[#2c2c2c]"}`}>
                  <TabIcon n={n} />
                </div>
              ))}
            </div>
          ))}
        </div>
        <div className="flex-1 pl-[9px] pr-[9px] pt-[9px] text-[#d8d8d8]">
          <Dd w="w-full" className="pl-[7px] pr-[4px]">
            <span>Add Modifier</span>
            <Chevron />
          </Dd>
          <div className="mt-[7px] h-[398px] rounded-[4px] bg-[#3a3a3a] flex flex-col">
            <div className="h-[29px] flex items-center border-b border-[#333] px-[5px]">
              <span className="ml-[3px]"><Tri /></span>
              <svg width="16" height="16" viewBox="0 0 16 16" fill="none" stroke="#ccc" className="ml-[16px] shrink-0"><rect x="2" y="5" width="3" height="9" /><rect x="7" y="2" width="3" height="12" fill="#ccc" /></svg>
              <div className="ml-[7px] w-[35px] h-[18px] rounded-[4px] bg-[#1d1d1d] flex items-center pl-[9px] text-[#e6e6e6] overflow-hidden">Arra</div>
              <div className="ml-[10px] flex h-[18px] rounded-[4px] overflow-hidden">
                {["cam", "mon", "edit"].map((n) => (
                  <div key={n} className="w-[24.5px] mr-[1px] bg-[#5680c2] flex items-center justify-center">
                    <svg width="16" height="14" viewBox="0 0 16 14" fill="none" stroke="#fff">
                      {n === "cam" && <><rect x="1" y="3" width="14" height="10" fill="#fff" stroke="none" /><circle cx="8" cy="8" r="3" stroke="#5680c2" strokeWidth="1.5" /></>}
                      {n === "mon" && <><rect x="1" y="2" width="14" height="9" fill="#fff" stroke="none" /><path d="M4 13 H12 M8 11 V13" /></>}
                      {n === "edit" && <><path d="M3 3 H12 V12 H3 Z" strokeDasharray="2 1" /><rect x="1" y="11" width="3" height="3" /><rect x="11" y="11" width="3" height="3" /><rect x="1" y="1" width="3" height="3" /><rect x="11" y="1" width="4" height="4" fill="#fff" stroke="none" /></>}
                    </svg>
                  </div>
                ))}
                <div className="w-[24px] bg-[#565656] flex items-center justify-center">
                  <svg width="14" height="14" viewBox="0 0 14 14" fill="none" stroke="#ddd"><path d="M2 2 H12 L7 12 Z" /><rect x="1" y="1" width="2" height="2" /><rect x="11" y="1" width="2" height="2" /><rect x="6" y="11" width="2" height="2" /></svg>
                </div>
              </div>
              <div className="ml-[9px] flex h-[18px] rounded-[4px] overflow-hidden">
                <div className="w-[22px] bg-[#565656] border-r border-[#444] flex items-center justify-center"><svg width="10" height="8" viewBox="0 0 10 8"><path d="M5 0 L10 7 H0 Z" fill="#e6e6e6" /></svg></div>
                <div className="w-[22px] bg-[#565656] flex items-center justify-center"><svg width="10" height="8" viewBox="0 0 10 8"><path d="M5 8 L10 1 H0 Z" fill="#e6e6e6" /></svg></div>
              </div>
              <svg width="10" height="10" viewBox="0 0 10 10" stroke="#ddd" strokeWidth="1.1" className="ml-[13px]"><path d="M1 1 L9 9 M9 1 L1 9" /></svg>
            </div>
            <div className="flex flex-col pl-[5px] pr-[7px] pt-[5px]">
              <div className="flex justify-between">
                <div className="w-[132px] h-[18px] rounded-[4px] bg-[#585858] flex items-center justify-center text-[#e6e6e6]">Apply</div>
                <div className="w-[133px] h-[18px] rounded-[4px] bg-[#585858] flex items-center justify-center text-[#e6e6e6]">Copy</div>
              </div>
              <div className="mt-[11px] flex items-center h-[18px]">
                <span className="w-[68px] pl-[7px]">Fit Type:</span>
                <Dd w="flex-1" className="pl-[8px] pr-[3px]">
                  <span>Fixed Count</span>
                  <Chevron />
                </Dd>
              </div>
              <div className="mt-[4px] h-[18px] rounded-[4px] bg-[#585858] flex items-center justify-between pl-[15px] pr-[13px] text-[#e6e6e6]">
                <span>Count</span><span>5</span>
              </div>
              <div className="mt-[12px] flex h-[18px] items-center">
                <div className="w-[143px] flex items-center pl-[3px] gap-[9px]"><Check /><span>Constant Offset</span></div>
                <div className="flex items-center pl-[3px] gap-[9px]"><Check on /><span className="text-[#e6e6e6]">Relative Offset</span></div>
              </div>
              <div className="flex mt-[4px] justify-between">
                <div className="flex flex-col gap-[1px] rounded-[4px] overflow-hidden">
                  <Field label="X" value="0 m" dim />
                  <Field label="Y" value="0 m" dim />
                  <Field label="Z" value="0 m" dim />
                </div>
                <div className="flex flex-col gap-[1px] rounded-[4px] overflow-hidden">
                  <Field value="1.200" />
                  <Field value="0.000" />
                  <Field value="0.000" />
                </div>
              </div>
              <div className="mt-[13px] flex h-[18px] items-center">
                <div className="w-[143px] flex items-center pl-[3px] gap-[9px]"><Check /><span>Merge</span></div>
                <div className="flex items-center pl-[3px] gap-[9px]"><Check /><span>Object Offset</span></div>
              </div>
              <div className="mt-[4px] flex h-[18px] items-center">
                <div className="w-[143px] flex items-center pl-[3px] gap-[9px] text-[#8e8e8e]"><Check dim /><span>First Last</span></div>
                <div className="w-[133px] h-[18px] bg-[#2a2a2a] rounded-[4px] flex items-center justify-between px-[3px]"><CubeSel c="#9a9a9a" s={14} /><Dropper c="#9a9a9a" /></div>
              </div>
              <div className="mt-[4px] w-[133px] h-[18px] rounded-[4px] bg-[#4a4a4a] text-[#8e8e8e] flex items-center justify-between pl-[15px] pr-[14px]">
                <span>Distance</span><span>0.01 m</span>
              </div>
              <div className="mt-[3px] h-[22px] flex items-center pl-[7px]">UVs:</div>
              <div className="mt-[1px]">
                <Slider label="U Offset" value="0.0000" top />
                <Slider label="V Offset" value="0.0000" />
              </div>
              <div className="mt-[12px] flex items-center h-[18px]">
                <span className="w-[68px] pl-[7px]">Start Cap:</span>
                <div className="flex-1 h-[18px] bg-[#1d1d1d] rounded-[4px] flex items-center justify-between px-[3px]"><CubeSel s={14} /><Dropper /></div>
              </div>
              <div className="mt-[4px] flex items-center h-[18px]">
                <span className="w-[68px] pl-[7px]">End Cap:</span>
                <div className="flex-1 h-[18px] bg-[#1d1d1d] rounded-[4px] flex items-center justify-between px-[3px]"><CubeSel s={14} /><Dropper /></div>
              </div>
            </div>
          </div>
        </div>
      </div>
    </div>
  );
}

const wsTabs = ["Modeling", "Sculpting", "UV Editing", "Texture Paint", "Shading", "Animation", "Rendering", "Compositing", "Scripting"];

const SceneField = ({ icon, name }: { icon: ReactNode; name: string }) => (
  <div className="flex h-[19px] items-center rounded-[4px] overflow-hidden">
    <div className="w-[31px] h-full bg-[#2f2f2f] flex items-center justify-between px-[4px]">{icon}<Chevron /></div>
    <div className="w-[120px] h-full bg-[#1d1d1d] flex items-center pl-[7px] text-[#d6d6d6]">{name}</div>
    <div className="w-[20px] h-full bg-[#565656] flex items-center justify-center">
      <svg width="14" height="14" viewBox="0 0 14 14" fill="none" stroke="#e6e6e6"><path d="M4 4 V1 H10 L13 4 V10 H10 M1 4 H10 V13 H1 Z" /></svg>
    </div>
    <div className="w-[19px] h-full bg-[#2f2f2f] flex items-center justify-center">
      <svg width="10" height="10" viewBox="0 0 10 10" stroke="#666"><path d="M1 1 L9 9 M9 1 L1 9" /></svg>
    </div>
  </div>
);

function TopBar() {
  return (
    <div className="h-[28px] bg-[#1d1d1d] flex items-center pl-[10px] text-[#d6d6d6] shrink-0">
      <svg width="17" height="14" viewBox="0 0 20 16" className="shrink-0">
        <path d="M12 1 A7.5 7.5 0 1 1 5 11 L1 8 H6 L2 5 H8 L5 1 Z" fill="#e6e6e6" />
        <circle cx="12" cy="8.5" r="3.6" fill="#1d1d1d" />
        <circle cx="12" cy="8.5" r="1.8" fill="#e6e6e6" />
      </svg>
      <div className="ml-[8px] flex gap-[12.5px]">
        {["File", "Edit", "Render", "Window", "Help"].map((m) => (
          <span key={m}>{m}</span>
        ))}
      </div>
      <div className="ml-[24px] self-end flex gap-[2px] h-[23px]">
        <div className="w-[52px] rounded-t-[4px] bg-[#3d3d3d] flex items-center justify-center text-[#e8e8e8]">Layout</div>
        {wsTabs.map((t) => (
          <div key={t} className="rounded-t-[4px] bg-[#2b2b2b] px-[7px] flex items-center text-[#8a8a8a]">{t}</div>
        ))}
        <div className="ml-[5px] flex items-center text-[#8a8a8a] text-[14px]">+</div>
      </div>
      <div className="ml-auto flex gap-[6px] pr-[9px]">
        <SceneField
          name="Scene"
          icon={<svg width="16" height="16" viewBox="0 0 16 16"><path d="M5 2 L9 11 A4 4 0 0 1 1 11 Z" fill="#e0e0e0" /><circle cx="12" cy="3" r="2.2" fill="#e0e0e0" /><circle cx="11" cy="11" r="4" fill="none" stroke="#e0e0e0" /></svg>}
        />
        <SceneField
          name="View Layer"
          icon={<svg width="16" height="16" viewBox="0 0 16 16" fill="none" stroke="#e0e0e0"><path d="M1 4 V15 H12 M3 2 V13 H14" /><rect x="5" y="1" width="10" height="10" fill="#555" /><path d="M6 10 L10 5 L14 10 Z" fill="#fff" stroke="none" /></svg>}
        />
      </div>
    </div>
  );
}

const NOTE = "absolute bg-white text-[#f5141e] font-['Open_Sans',sans-serif] flex items-center whitespace-nowrap text-[34.8px] pl-[1px]";

function Notes() {
  return (
    <>
      <div className={`${NOTE} left-[440px] top-[45px] w-[978px] h-[158px] leading-[49.6px] items-start`}>
        <div className="-mt-[1px]">
          <div>Модификатор массив Array</div>
          <div>Позволяет делать множество копий, изменение одной</div>
          <div>копии приведет к изменению всех копий.</div>
        </div>
      </div>
      <div className={`${NOTE} left-[1488px] top-[235px] w-[411px] h-[56px] pb-[5px]`}>Применить изменения</div>
      <div className={`${NOTE} left-[998px] top-[291px] w-[433px] h-[56px] pb-[5px]`}>Добавить модификатор</div>
      <div className={`${NOTE} left-[1190px] top-[421px] w-[361px] h-[54px] pb-[5px]`}>Количество копий</div>
      <div className={`${NOTE} left-[1185px] top-[584px] w-[327px] h-[52px] pb-[5px]`}>Смещение копий</div>
      <div className={`${NOTE} left-[214px] top-[846px] w-[1261px] h-[110px] leading-[50px] pb-[13px]`}>
        <div>
          <div>ВНИМАНИЕ, apply не всегда нужно нажимать, если нажать то изменения</div>
          <div>внедрятся в объект и уже как модификатор работать не будет</div>
        </div>
      </div>
      {/* hand drawn red callouts */}
      <svg className="absolute inset-0 pointer-events-none" width="1920" height="1040" fill="none" stroke="#ed1c24" strokeWidth="4">
        <rect x="1604" y="393" width="54" height="28" />
        <rect x="1621" y="455" width="144" height="23" />
        <rect x="1625" y="504" width="222" height="23" />
        <rect x="1769" y="559" width="114" height="58" />
        <path d="M1671 291 V455" />
        <path d="M1435 335 L1606 396" />
        <path d="M1545 463 L1626 508" />
        <path d="M1506 630 L1770 600" />
      </svg>
    </>
  );
}

export default function App() {
  return (
    <div className={`${UI} relative w-[1920px] h-[1040px] overflow-hidden bg-[#1a1a1a] text-[12px] flex flex-col`}>
      <div className="h-[23px] bg-white flex items-center shrink-0 font-['Open_Sans',sans-serif] text-[#111]">
        <svg width="14" height="13" viewBox="0 0 20 16" className="ml-[4px]">
          <path d="M12 1 A7.5 7.5 0 1 1 5 11 L1 8 H6 L2 5 H8 L5 1 Z" fill="#ea7600" />
          <circle cx="12" cy="8.5" r="3.6" fill="#fff" />
          <circle cx="12" cy="8.5" r="2.2" fill="#265787" />
        </svg>
        <span className="ml-[5px]">Blender</span>
        <div className="ml-auto flex items-center">
          <svg width="46" height="20" viewBox="0 0 46 20" stroke="#111"><path d="M18 10.5 H28" /></svg>
          <svg width="46" height="20" viewBox="0 0 46 20" fill="none" stroke="#111"><path d="M18.5 8.5 H26.5 V15.5 H18.5 Z M21 8 V5.5 H29 V12.5 H27" /></svg>
          <svg width="46" height="20" viewBox="0 0 46 20" stroke="#111"><path d="M18 5 L28 15 M28 5 L18 15" /></svg>
        </div>
      </div>
      <TopBar />
      <div className="flex-1 min-h-0 flex gap-[2px]">
        <div className="w-[1586px] flex flex-col shrink-0">
          <Viewport />
          <Timeline />
        </div>
        <div className="flex-1 flex flex-col min-w-0">
          <Outliner />
          <Properties />
        </div>
      </div>
      <div className="h-[20px] bg-[#2f2f2f] flex items-center shrink-0 text-[#a8a8a8] pl-[12px] pr-[30px] text-[11.5px]">
        <Mouse />
        <span className="ml-[12px] w-[214px]">Loop Select</span>
        <Mouse dot />
        <span className="ml-[12px] w-[216px]">Center View to Mouse</span>
        <Mouse />
        <span className="ml-auto">Cube | Вершин:4/8 | Рёбер:4/12 | Граней:1/6 | Треуг.:12 | Пам.: 48.0 MiB | v2.82.7</span>
      </div>
      <Notes />
    </div>
  );
}
